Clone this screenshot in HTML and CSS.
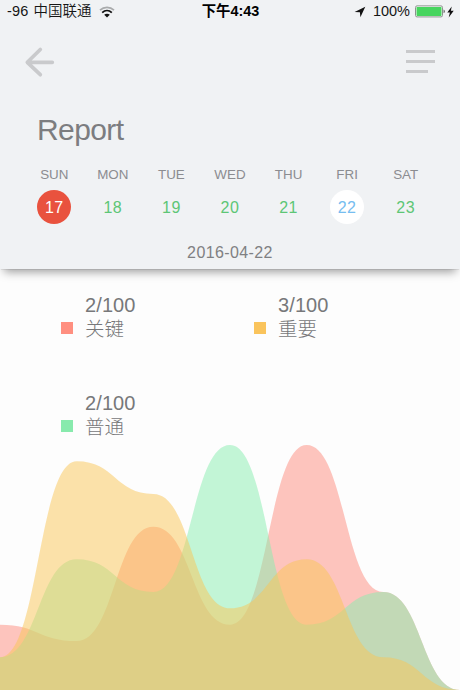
FILE: index.html
```
<!DOCTYPE html>
<html lang="zh-CN">

<head>
    <meta charset="UTF-8" />
    <meta name="viewport" content="width=device-width, initial-scale=1.0" />
    <title>Report</title>
    <link rel="stylesheet" href="styles.css">
</head>

<body>
    <header class="header">
        <div class="status">
            <div class="carrier">
                <span class="signal">-96</span>
                <span class="operator">中国联通</span>
                <svg class="wifi" width="16" height="12" viewBox="0 0 16 12">
                    <path d="M1 4.2C5 .4 11 .4 15 4.2" fill="none" stroke="#a9abac" stroke-width="1.7" />
                    <path d="M3.2 6.6C6 4 10 4 12.8 6.6" fill="none" stroke="#111" stroke-width="1.8" />
                    <path d="M5.2 8.7C6.8 7.3 9.2 7.3 10.8 8.7L8 11.5z" fill="#111" />
                </svg>
            </div>
            <div class="time">下午4:43</div>
            <div class="power">
                <svg class="location" width="12" height="12" viewBox="0 0 12 12">
                    <path d="M11.3.7L.6 5.9L5.9 6.2L6.4 11.3z" fill="#111" />
                </svg>
                <span class="percent">100%</span>
                <svg class="battery" width="31" height="13" viewBox="0 0 31 13">
                    <rect x=".5" y=".9" width="27" height="11" rx="1.5" fill="#fff" stroke="#8b918d" />
                    <rect x="1.5" y="1.9" width="25" height="9" rx=".6" fill="#46d55e" />
                    <path d="M28.7 4.5C30 5 30 7.8 28.7 8.3z" fill="#333" />
                </svg>
                <svg class="bolt" width="7" height="12" viewBox="0 0 7 12">
                    <path d="M4.7.4L.3 6.6H2.9L1.7 11.5L6.7 4.8H3.9z" fill="#111" />
                </svg>
            </div>
        </div>

        <div class="nav">
            <svg class="back" width="32" height="32" viewBox="0 0 32 32">
                <path d="M17.3 3.5L4.3 16.3L17.3 28.7M4.5 16.3H29.3" />
            </svg>
            <div class="menu">
                <i></i>
                <i></i>
                <i class="short"></i>
            </div>
        </div>

        <h1>Report</h1>

        <div class="week">
            <div class="day"><span class="name">SUN</span><span class="num active">17</span></div>
            <div class="day"><span class="name">MON</span><span class="num">18</span></div>
            <div class="day"><span class="name">TUE</span><span class="num">19</span></div>
            <div class="day"><span class="name">WED</span><span class="num">20</span></div>
            <div class="day"><span class="name">THU</span><span class="num">21</span></div>
            <div class="day"><span class="name">FRI</span><span class="num today">22</span></div>
            <div class="day"><span class="name">SAT</span><span class="num">23</span></div>
        </div>
        <div class="date">2016-04-22</div>
    </header>

    <ul class="legend">
        <li><i class="key"></i><div><b>2/100</b><span>关键</span></div></li>
        <li><i class="major"></i><div><b>3/100</b><span>重要</span></div></li>
        <li><i class="normal"></i><div><b>2/100</b><span>普通</span></div></li>
    </ul>

    <svg class="chart" width="460" height="245" viewBox="0 0 460 245">
        <path class="key" />
        <path class="normal" />
        <path class="major" />
    </svg>

    <script>
        const data = {
            key: [4, 3, 10, 4, 15, 6, 0],
            normal: [2, 8, 6, 15, 4, 6, 0],
            major: [2, 14, 12, 5, 8, 2, 0]
        }
        const width = 460
        const height = 245
        const max = 15

        // smooth area, flat at every data point
        function area(list) {
            const step = width / (list.length - 1)
            const y = list.map(n => height - n * height / max)
            let d = `M0 ${height}L0 ${y[0]}`
            for (let i = 1; i < list.length; i++) {
                const mid = (i - 0.5) * step
                d += `C${mid} ${y[i - 1]} ${mid} ${y[i]} ${i * step} ${y[i]}`
            }
            return d + `L${width} ${height}Z`
        }

        for (const name in data) {
            document.querySelector('.chart .' + name).setAttribute('d', area(data[name]))
        }
    </script>
</body>

</html>
```
FILE: styles.css
```
* {
margin: 0;
padding: 0;
box-sizing: border-box;
}

body {
width: 460px;
height: 690px;
overflow: hidden;
display: flex;
flex-direction: column;
background: #fdfdfd;
color: #7f8082;
font-family: "Liberation Sans", "Noto Sans CJK SC", sans-serif;
}

svg {
display: block;
flex: none;
}

.header {
height: 269px;
flex: none;
background: #f0f2f4;
box-shadow: 0 7px 9px -4px rgba(0, 0, 0, .38), 0 1px 1px -1px rgba(0, 0, 0, .4);
}

.status {
height: 23px;
display: grid;
grid-template-columns: 1fr auto 1fr;
align-items: center;
padding: 0 6px 0 7px;
color: #151515;
font-size: 14px;
line-height: 23px;
}

.carrier,
.power {
display: flex;
align-items: center;
}

.signal {
font-size: 14.5px;
letter-spacing: .2px;
}

.operator {
margin-left: 5px;
font-size: 14.5px;
font-weight: 350;
}

.wifi {
margin-left: 7px;
}

.time {
font-weight: 600;
font-size: 14.4px;
color: #000;
}

.power {
justify-content: flex-end;
}

.percent {
margin: 0 5px 0 7px;
font-size: 14.5px;
}

.bolt {
margin-left: 1px;
}

.nav {
height: 80px;
padding: 23px 25px 0 23px;
display: flex;
justify-content: space-between;
}

.back path {
fill: none;
stroke: #c9cacc;
stroke-width: 3.7;
stroke-linecap: round;
stroke-linejoin: round;
}

.menu {
width: 29px;
padding-top: 4px;
display: flex;
flex-direction: column;
gap: 7px;
}

.menu i {
height: 3px;
background: #c9cacc;
}

.menu .short {
width: 22px;
}

h1 {
margin-left: 37px;
height: 54px;
line-height: 54px;
font-size: 30px;
font-weight: 400;
letter-spacing: -.6px;
color: #7c7d80;
}

.week {
display: grid;
grid-template-columns: repeat(7, 1fr);
margin: 8px 25px 0;
}

.day {
display: flex;
flex-direction: column;
align-items: center;
}

.name {
height: 18px;
line-height: 19px;
font-size: 13.4px;
color: #8b8c90;
}

.num {
width: 34px;
height: 34px;
margin-top: 7px;
border-radius: 50%;
line-height: 35px;
text-align: center;
font-size: 16px;
letter-spacing: .5px;
color: #5dc676;
}

.num.active {
background: #e9523e;
color: #fff;
}

.num.today {
background: #fff;
color: #76bdf0;
}

.date {
margin-top: 19px;
line-height: 20px;
text-align: center;
font-size: 16px;
letter-spacing: .4px;
}

.legend {
display: grid;
grid-template-columns: 193px 193px;
grid-auto-rows: 98px;
height: 176px;
padding: 24px 0 0 61px;
list-style: none;
}

.legend li {
display: flex;
}

.legend i {
width: 12px;
height: 12px;
margin: 29px 12px 0 0;
}

.legend b,
.legend span {
display: block;
height: 24px;
line-height: 24px;
font-size: 20px;
font-weight: 300;
color: #77787a;
}

.legend b {
letter-spacing: .1px;
}

.legend span {
font-size: 19.5px;
}

.legend i.key {
background: #ff8f80;
}

.legend i.major {
background: #fac45c;
}

.legend i.normal {
background: #88eaad;
}

.chart path {
fill-opacity: .5;
}

.chart .key {
fill: #fd8b7d;
}

.chart .normal {
fill: #87edaf;
}

.chart .major {
fill: #fac656;
}
```
